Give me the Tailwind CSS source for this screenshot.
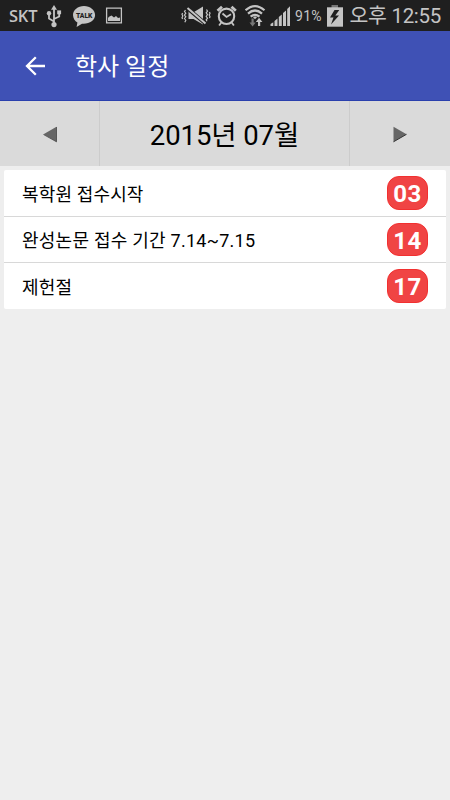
<!DOCTYPE html>
<html lang="ko">
<head>
<meta charset="utf-8">
<meta name="viewport" content="width=device-width, initial-scale=1">
<title>학사 일정</title>
<script src="https://cdn.jsdelivr.net/npm/@tailwindcss/browser@4"></script>
</head>
<body class="w-[450px] h-[800px] overflow-hidden bg-[#eeeeee] font-[Roboto,'Noto_Sans_CJK_KR',sans-serif] text-black flex flex-col">
  <!-- Status bar -->
  <div class="h-[31px] shrink-0 bg-[#1f1f1f] text-[#c4c4c4] flex items-center whitespace-nowrap">
    <span class="ml-[9px] w-[30px] text-[16.500px] leading-[30px] font-semibold font-['Open_Sans',sans-serif] tracking-[-0.2px]">SKT</span>
    <svg class="ml-[7px] shrink-0" width="16" height="24" viewBox="46 3 16 24" fill="none" stroke="#c4c4c4" stroke-width="1.8">
      <path d="M54 8V23M54 20.500L49 17.500V13M54 18L59.200 15.500V12"/>
      <path d="M54 4L51 8.800H57Z" fill="#c4c4c4" stroke="none"/>
      <circle cx="54" cy="23.600" r="2.600" fill="#c4c4c4" stroke="none"/>
      <circle cx="49" cy="12.200" r="2.200" fill="#c4c4c4" stroke="none"/>
      <path d="M57.200 9.400h3.900v3.900h-3.900z" fill="#c4c4c4" stroke="none"/>
    </svg>
    <svg class="ml-[10px] shrink-0" width="24" height="24" viewBox="72 3 24 24">
      <path d="M84 5C77.800 5 73 9 73 14c0 3.300 1.900 6 4.400 7.500L76.600 26l5.400-3.300c7.200.6 13.100-3.300 13.100-8.700C95.100 9 90.200 5 84 5Z" fill="#c4c4c4"/>
      <text x="84.200" y="17" text-anchor="middle" font-family="Roboto, sans-serif" font-size="8" font-weight="900" fill="#1f1f1f" textLength="16.500" lengthAdjust="spacingAndGlyphs">TALK</text>
    </svg>
    <svg class="ml-[9px] shrink-0" width="18" height="18" viewBox="105 6.500 18 18">
      <path d="M106.600 7.600h14.800v14.800h-14.800z" fill="none" stroke="#c4c4c4" stroke-width="1.300"/>
      <path d="M108 20.500v-3l1-1.200 2.500-1.300 2.500 2 2-1.500 2 2 2-.5v3.500z" fill="#c4c4c4"/>
    </svg>
    <svg class="ml-[58px] shrink-0" width="30" height="24" viewBox="181 3 30 24" fill="none" stroke="#c4c4c4">
      <path d="M188.500 8.500h2.500l3 2.500L203 5.500v18L193.500 18h-5z" fill="#c4c4c4" stroke="none"/>
      <path d="M187 7l19 16" stroke="#1f1f1f" stroke-width="3.600"/>
      <path d="M187.500 7l18 15.600" stroke-width="2"/>
      <path d="M185.500 9l-1 1.500 1.300 1.700-1.300 1.800 1.300 1.800-1.300 1.700 1.300 1.700-1 2M182.600 12l-.6 1.300.8 1.700-.8 1.700.6 1.300M206.500 8.500l1 1.600-1.300 1.700 1.300 1.800-1.300 1.800 1.300 1.800-1.300 1.600.8 1.500M209.500 11l.5 1.500-.8 1.600.8 1.700-.5 1.300" stroke-width="1.200"/>
    </svg>
    <svg class="ml-[5px] shrink-0" width="22" height="24" viewBox="216 3 22 24" fill="none" stroke="#c4c4c4">
      <circle cx="226.500" cy="15.300" r="7.700" stroke-width="2.100"/>
      <path d="M217.500 9.800l4.500-4M231.500 5.800l4.300 4" stroke-width="2.800"/>
      <path d="M222.500 12.500l4 3.500 4.500-2.700M221.300 21.500l-2.200 3M231.700 21.500l2.200 3" stroke-width="1.800"/>
    </svg>
    <svg class="ml-[7px] shrink-0" width="21" height="24" viewBox="245 3 21 24" fill="none" stroke="#c4c4c4">
      <path d="M245.600 9.300Q255 .8 264.500 9.300M248 12.600Q255 6.400 262 12.600M250.600 15.700Q255 12 259.500 15.700" stroke-width="2.200"/>
      <path d="M255 15.200l2 1-2 2-2-2z" fill="#c4c4c4" stroke="none"/>
      <path d="M251.500 17.500h2.200v4h2l-3.100 4-3.100-4h2z" fill="#777" stroke="none"/>
      <path d="M258 25h2.200v-4h2.200L259.100 16.800l-3.300 4.200h2.200z" fill="#c4c4c4" stroke="none"/>
    </svg>
    <svg class="ml-[4px] shrink-0" width="22" height="24" viewBox="270 3 22 24" fill="#c4c4c4">
      <path d="M270.500 25v-2l2.800-1.800V25zM274.500 25v-5l3-2.500V25zM278.800 25v-9l3-2.500V25zM283 25V12l3-2.500V25zM287.200 25V8l2.800-2.800V25z"/>
    </svg>
    <span class="ml-[3px] w-[28px] text-[14px] leading-[30px] tracking-[0.3px]">91%</span>
    <svg class="ml-[4px] shrink-0" width="16" height="24" viewBox="327 3 16 24">
      <path d="M331.500 4h6.500v3h-6.500z" fill="#777"/>
      <path d="M327 6.300h16V25.700h-16z" fill="#c4c4c4"/>
      <path d="M334.500 9l-4.500 7.500h3.500l-2.500 7 8-9h-3.700l4-5.500z" fill="#1f1f1f"/>
    </svg>
    <span class="ml-[6.500px] text-[20.500px] leading-[28px] tracking-[-0.3px]">오후 12:55</span>
  </div>

  <!-- App bar -->
  <header class="h-[70px] shrink-0 bg-[#3f51b5] border-b border-[#2a40ad] text-white flex items-center">
    <svg class="ml-[25px] mt-px shrink-0" width="20" height="20" viewBox="0 0 20 20" fill="none" stroke="#fff" stroke-width="2.300">
      <path d="M20 10H2M10.800 1.200L2 10l8.800 8.800"/>
    </svg>
    <h1 class="ml-[30px] pt-[3px] text-[24px] leading-[30px]">학사 일정</h1>
  </header>

  <!-- Month selector -->
  <nav class="h-[65px] shrink-0 bg-[#dadada] flex items-stretch">
    <button class="w-[100px] border-r border-[#cccccc] flex items-center justify-center pt-[2px]" aria-label="이전 달">
      <svg width="14" height="17" viewBox="0 0 14 17"><path d="M13.500.8v15L.5 8.300z" fill="#666"/><path d="M.5 8.500l13 7.300V1" fill="none" stroke="#444" stroke-width=".8"/></svg>
    </button>
    <div class="flex-1 flex items-center justify-center text-[27.500px] leading-[36px] tracking-[-0.1px] pt-[5px]">2015년 07월</div>
    <button class="w-[101px] border-l border-[#cccccc] flex items-center justify-center pt-[2px]" aria-label="다음 달">
      <svg width="14" height="17" viewBox="0 0 14 17"><path d="M.5.8v15l13-7.500z" fill="#666"/><path d="M.5 15.800l13-7.500" stroke="#333" stroke-width="1"/></svg>
    </button>
  </nav>

  <!-- Schedule -->
  <ul class="mx-[4px] mt-[4px] w-[442px] text-[18px] leading-[26px] tracking-[0.15px]">
    <li class="h-[47px] rounded-t-[2px] bg-white border-b border-[#d8d8d8] flex items-center justify-between pl-[18px] pr-[18px]">
      <span class="pt-[3px]">복학원 접수시작</span>
      <span class="w-[41px] h-[34px] rounded-[12px] bg-[#f04444] border border-[#f23030] text-white font-bold text-[24px] tracking-[0.400px] pt-[2px] flex items-center justify-center">03</span>
    </li>
    <li class="h-[46px] bg-white border-b border-[#d8d8d8] flex items-center justify-between pl-[18px] pr-[18px]">
      <span class="pt-[3px] tracking-[0.250px]">완성논문 접수 기간 7.14~7.15</span>
      <span class="w-[41px] h-[33px] rounded-[12px] bg-[#f04444] border border-[#f23030] text-white font-bold text-[24px] tracking-[0.400px] pt-[2px] flex items-center justify-center">14</span>
    </li>
    <li class="h-[46px] rounded-b-[2px] bg-white flex items-center justify-between pl-[18px] pr-[18px]">
      <span class="pt-[3px]">제헌절</span>
      <span class="w-[41px] h-[34px] rounded-[12px] bg-[#f04444] border border-[#f23030] text-white font-bold text-[24px] tracking-[0.400px] pt-[2px] flex items-center justify-center">17</span>
    </li>
  </ul>
</body>
</html>
